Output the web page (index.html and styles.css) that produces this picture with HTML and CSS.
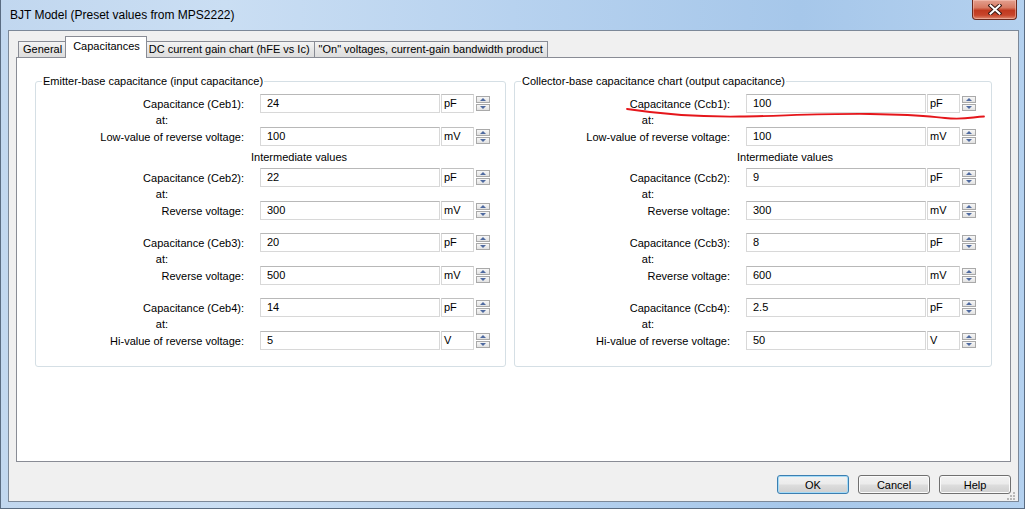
FILE: index.html
```html
<!DOCTYPE html>
<html>
<head>
<meta charset="utf-8">
<title>BJT Model</title>
<link rel="stylesheet" href="styles.css">
</head>
<body>
<div class="window">
  <div class="titlebar">
    <span class="title">BJT Model (Preset values from MPS2222)</span>
    <div class="close">
      <svg width="14" height="11" viewBox="0 0 14 11">
        <path d="M2.5 1.5 L11.5 9.5 M11.5 1.5 L2.5 9.5" stroke="#3a1a14" stroke-width="4" stroke-linecap="square" fill="none"/>
        <path d="M2.5 1.5 L11.5 9.5 M11.5 1.5 L2.5 9.5" stroke="#ffffff" stroke-width="2" stroke-linecap="square" fill="none"/>
      </svg>
    </div>
  </div>
  <div class="client">
    <div class="tabs">
      <div class="tab">General</div>
      <div class="tab active">Capacitances</div>
      <div class="tab">DC current gain chart (hFE vs Ic)</div>
      <div class="tab">"On" voltages, current-gain bandwidth product</div>
    </div>
    <div class="panel">
      <fieldset class="group g-left">
        <legend>Emitter-base capacitance (input capacitance)</legend>
        <div class="block">
          <div class="row"><span class="lbl">Capacitance (Ceb1):</span><span class="field">24</span><span class="unit">pF</span><span class="spin"><i class="up"></i><i class="dn"></i></span></div>
          <div class="row at"><span class="lbl">at:</span></div>
          <div class="row"><span class="lbl">Low-value of reverse voltage:</span><span class="field">100</span><span class="unit">mV</span><span class="spin"><i class="up"></i><i class="dn"></i></span></div>
        </div>
        <div class="inter"><span>Intermediate values</span></div>
        <div class="block">
          <div class="row"><span class="lbl">Capacitance (Ceb2):</span><span class="field">22</span><span class="unit">pF</span><span class="spin"><i class="up"></i><i class="dn"></i></span></div>
          <div class="row at"><span class="lbl">at:</span></div>
          <div class="row"><span class="lbl">Reverse voltage:</span><span class="field">300</span><span class="unit">mV</span><span class="spin"><i class="up"></i><i class="dn"></i></span></div>
        </div>
        <div class="block">
          <div class="row"><span class="lbl">Capacitance (Ceb3):</span><span class="field">20</span><span class="unit">pF</span><span class="spin"><i class="up"></i><i class="dn"></i></span></div>
          <div class="row at"><span class="lbl">at:</span></div>
          <div class="row"><span class="lbl">Reverse voltage:</span><span class="field">500</span><span class="unit">mV</span><span class="spin"><i class="up"></i><i class="dn"></i></span></div>
        </div>
        <div class="block">
          <div class="row"><span class="lbl">Capacitance (Ceb4):</span><span class="field">14</span><span class="unit">pF</span><span class="spin"><i class="up"></i><i class="dn"></i></span></div>
          <div class="row at"><span class="lbl">at:</span></div>
          <div class="row"><span class="lbl">Hi-value of reverse voltage:</span><span class="field">5</span><span class="unit">V</span><span class="spin"><i class="up"></i><i class="dn"></i></span></div>
        </div>
      </fieldset>
      <fieldset class="group g-right">
        <legend>Collector-base capacitance chart (output capacitance)</legend>
        <div class="block">
          <div class="row"><span class="lbl">Capacitance (Ccb1):</span><span class="field">100</span><span class="unit">pF</span><span class="spin"><i class="up"></i><i class="dn"></i></span></div>
          <div class="row at"><span class="lbl">at:</span></div>
          <div class="row"><span class="lbl">Low-value of reverse voltage:</span><span class="field">100</span><span class="unit">mV</span><span class="spin"><i class="up"></i><i class="dn"></i></span></div>
        </div>
        <div class="inter"><span>Intermediate values</span></div>
        <div class="block">
          <div class="row"><span class="lbl">Capacitance (Ccb2):</span><span class="field">9</span><span class="unit">pF</span><span class="spin"><i class="up"></i><i class="dn"></i></span></div>
          <div class="row at"><span class="lbl">at:</span></div>
          <div class="row"><span class="lbl">Reverse voltage:</span><span class="field">300</span><span class="unit">mV</span><span class="spin"><i class="up"></i><i class="dn"></i></span></div>
        </div>
        <div class="block">
          <div class="row"><span class="lbl">Capacitance (Ccb3):</span><span class="field">8</span><span class="unit">pF</span><span class="spin"><i class="up"></i><i class="dn"></i></span></div>
          <div class="row at"><span class="lbl">at:</span></div>
          <div class="row"><span class="lbl">Reverse voltage:</span><span class="field">600</span><span class="unit">mV</span><span class="spin"><i class="up"></i><i class="dn"></i></span></div>
        </div>
        <div class="block">
          <div class="row"><span class="lbl">Capacitance (Ccb4):</span><span class="field">2.5</span><span class="unit">pF</span><span class="spin"><i class="up"></i><i class="dn"></i></span></div>
          <div class="row at"><span class="lbl">at:</span></div>
          <div class="row"><span class="lbl">Hi-value of reverse voltage:</span><span class="field">50</span><span class="unit">V</span><span class="spin"><i class="up"></i><i class="dn"></i></span></div>
        </div>
      </fieldset>
    </div>
    <div class="buttons">
      <button class="btn default">OK</button>
      <button class="btn">Cancel</button>
      <button class="btn">Help</button>
    </div>
  </div>
  <svg class="grip" width="10" height="10" viewBox="0 0 10 10">
    <rect x="7" y="1" width="2" height="2" fill="#b8b8b8"/>
    <rect x="4" y="4" width="2" height="2" fill="#b8b8b8"/>
    <rect x="7" y="4" width="2" height="2" fill="#b8b8b8"/>
    <rect x="1" y="7" width="2" height="2" fill="#b8b8b8"/>
    <rect x="4" y="7" width="2" height="2" fill="#b8b8b8"/>
    <rect x="7" y="7" width="2" height="2" fill="#b8b8b8"/>
  </svg>
  <svg class="annot" width="1025" height="509" viewBox="0 0 1025 509">
    <path d="M627 109 C 660 114, 700 117, 740 116.5 S 820 113.5, 870 114 S 925 116, 945 118 S 972 117, 984 116.5" stroke="#e5161b" stroke-width="1.8" fill="none" stroke-linecap="round"/>
  </svg>
</div>
</body>
</html>
```
FILE: styles.css
```css
* { box-sizing: border-box; }
html, body { margin: 0; padding: 0; }
body {
  width: 1025px;
  height: 509px;
  overflow: hidden;
  font-family: "Liberation Sans", Arial, sans-serif;
  font-size: 11px;
  color: #000;
  background: #a9c8ea;
}
.window {
  position: relative;
  width: 1025px;
  height: 509px;
  display: flex;
  flex-direction: column;
  background: linear-gradient(90deg, #c1d7ef 0%, #cadef3 22%, #b7d2ef 50%, #a6c7ea 78%, #b4d1ef 100%);
  box-shadow: inset 1px 0 0 #5a6c82, inset -1px 0 0 #5a6c82, inset 0 -1px 0 #5a6c82;
}
.titlebar {
  height: 30px;
  flex: none;
  display: flex;
  justify-content: space-between;
  align-items: flex-start;
}
.title {
  font-size: 12px;
  line-height: 14px;
  margin: 8px 0 0 10px;
  color: #000;
}
.close {
  width: 45px;
  height: 20px;
  margin-right: 8px;
  border: 1px solid #6a2a1f;
  border-top: none;
  border-radius: 0 0 4px 4px;
  background: linear-gradient(#e3a08f 0%, #d77a63 40%, #c0391f 55%, #c8452b 80%, #dd8a70 100%);
  box-shadow: inset 0 0 0 1px rgba(255, 210, 200, 0.45);
  display: flex;
  align-items: center;
  justify-content: center;
}
.close svg { display: block; }
.client {
  flex: 1;
  margin: 0 6px 7px 8px;
  border: 1px solid #7c8898;
  background: #f0f0f0;
  padding: 5px 7px 0 7px;
  display: flex;
  flex-direction: column;
}
.tabs {
  display: flex;
  align-items: flex-end;
  height: 22px;
  padding-left: 3px;
  margin-bottom: -1px;
}
.tab {
  height: 17px;
  line-height: 15px;
  padding: 0 4px;
  border: 1px solid #898c95;
  border-bottom: none;
  margin-left: -1px;
  background: linear-gradient(#f4f4f4, #e6e6e6 50%, #dcdcdc 100%);
  white-space: nowrap;
}
.tab.active {
  position: relative;
  z-index: 1;
  height: 22px;
  line-height: 19px;
  padding: 0 6px 0 7px;
  margin: 0 -2px 0 -2px;
  background: #fff;
}
.panel {
  height: 405px;
  flex: none;
  background: #fff;
  border: 1px solid #898c95;
  padding: 17px 18px 0 18px;
  display: flex;
  align-items: flex-start;
  gap: 8px;
}
.group {
  margin: 0;
  min-width: 0;
  border: 1px solid #d5dfe5;
  border-radius: 3px;
  padding: 6px 15px 16px 0;
}
.g-left { width: 471px; }
.g-right { width: 478px; }
.group legend {
  margin-left: 6px;
  padding: 0 1px;
  line-height: 13px;
}
.block + .block { margin-top: 13px; }
.row {
  display: flex;
  align-items: center;
  height: 19px;
}
.lbl {
  flex: 1;
  text-align: right;
  padding-right: 16px;
  white-space: nowrap;
  line-height: 14px;
}
.row.at { height: 14px; }
.row.at .lbl { padding-right: 322px; }
.field {
  width: 180px;
  height: 19px;
  line-height: 17px;
  padding-left: 6px;
  border: 1px solid #d8d8d8;
  border-top-color: #b8b8b8;
  background: #fff;
}
.unit {
  width: 33px;
  height: 19px;
  margin-left: 1px;
  line-height: 17px;
  padding-left: 2px;
  border: 1px solid #d8d8d8;
  border-top-color: #c0c0c0;
  background: #fff;
}
.spin {
  width: 14px;
  margin-left: 2px;
  display: flex;
  flex-direction: column;
  gap: 1px;
}
.spin i {
  display: flex;
  align-items: center;
  justify-content: center;
  height: 7px;
  border: 1px solid #a9a9a9;
  background: linear-gradient(#f7f7f7, #e2e2e2);
}
.spin i::after {
  content: "";
  width: 0;
  height: 0;
  border-left: 3px solid transparent;
  border-right: 3px solid transparent;
}
.spin .up::after { border-bottom: 3px solid #4f6aa0; }
.spin .dn::after { border-top: 3px solid #4f6aa0; }
.inter {
  height: 22px;
  line-height: 22px;
  display: flex;
  justify-content: flex-end;
}
.inter span { width: 239px; }
.buttons {
  display: flex;
  justify-content: flex-end;
  gap: 9px;
  padding-top: 13px;
}
.btn {
  width: 72px;
  height: 19px;
  padding: 0;
  font-family: "Liberation Sans", Arial, sans-serif;
  font-size: 11px;
  color: #000;
  border: 1px solid #707070;
  border-radius: 3px;
  background: linear-gradient(#f2f2f2 0%, #ebebeb 48%, #dddddd 52%, #cfcfcf 100%);
  box-shadow: inset 0 0 0 1px #fbfbfb;
}
.btn.default {
  border-color: #3c7fb1;
  box-shadow: inset 0 0 0 1px #a5dbf7;
}
.grip {
  position: absolute;
  right: 9px;
  bottom: 8px;
}
.annot {
  position: absolute;
  left: 0;
  top: 0;
  pointer-events: none;
}
```
